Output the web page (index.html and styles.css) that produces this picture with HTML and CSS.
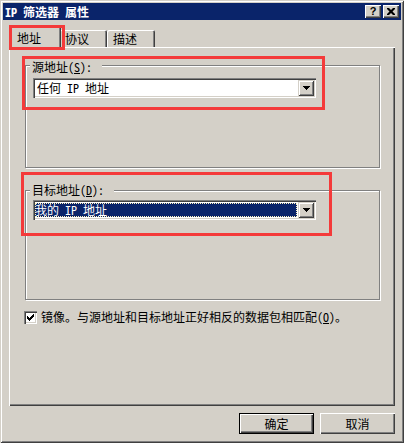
FILE: index.html
```html
<!DOCTYPE html>
<html lang="zh-CN">
<head>
<meta charset="utf-8">
<title>IP 筛选器 属性</title>
<link rel="stylesheet" href="styles.css">
</head>
<body>
<div class="window">
  <div class="titlebar">
    <span class="title">IP 筛选器 属性</span>
    <div class="title-buttons">
      <button class="tbtn help">?</button>
      <button class="tbtn close"><svg width="8" height="7" viewBox="0 0 8 7"><path d="M0 0h2l2 2l2-2h2v1l-2.5 2.5l2.5 2.5v1h-2l-2-2l-2 2h-2v-1l2.5-2.5l-2.5-2.5z" fill="#000"/></svg></button>
    </div>
  </div>

  <div class="tabs">
    <div class="tab selected">地址</div>
    <div class="tab">协议</div>
    <div class="tab">描述</div>
  </div>

  <div class="panel">
    <div class="group group-src">
      <div class="group-label">源地址(<u>S</u>):</div>
      <div class="combo">
        <div class="combo-field"><span class="combo-text">任何 IP 地址</span></div>
        <div class="combo-btn"><svg width="7" height="4" viewBox="0 0 7 4"><path d="M0 0h7v1h-1v1h-1v1h-1v1h-1v-1h-1v-1h-1v-1h-1z" fill="#000"/></svg></div>
      </div>
    </div>

    <div class="group group-dst">
      <div class="group-label">目标地址(<u>D</u>):</div>
      <div class="combo">
        <div class="combo-field"><span class="combo-text focused">我的 IP 地址</span></div>
        <div class="combo-btn"><svg width="7" height="4" viewBox="0 0 7 4"><path d="M0 0h7v1h-1v1h-1v1h-1v1h-1v-1h-1v-1h-1v-1h-1z" fill="#000"/></svg></div>
      </div>
    </div>

    <label class="check-row">
      <span class="checkbox"><svg width="7" height="7" viewBox="0 0 7 7"><path d="M6 0h1v3h-1v1h-1v1h-1v1h-1v1h-1v-1h-1v-1h-1v-1h-1v-3h1v1h1v1h1v1h1v-1h1v-1h1v-1h1z" fill="#000"/></svg></span>
      <span class="check-text">镜像。与源地址和目标地址正好相反的数据包相匹配(<u>O</u>)。</span>
    </label>
  </div>

  <div class="buttons">
    <button class="btn default">确定</button>
    <button class="btn">取消</button>
  </div>

  <div class="mark mark-tab"></div>
  <div class="mark mark-src"></div>
  <div class="mark mark-dst"></div>
</div>
</body>
</html>
```

FILE: styles.css
```css
* { box-sizing: border-box; }
html, body { margin: 0; padding: 0; background: #d4d0c8; }
body {
  font-family: "Noto Sans Mono CJK SC", "Noto Sans CJK SC", "DejaVu Sans", sans-serif;
  font-size: 12px;
  color: #000;
}
.window {
  position: relative;
  width: 404px;
  height: 443px;
  padding: 3px;
  background: #d4d0c8;
  box-shadow: inset 1px 1px #d4d0c8, inset -1px -1px #404040, inset 2px 2px #fff, inset -2px -2px #808080;
}
.titlebar {
  height: 17px;
  background: #0a246a;
  display: flex;
  align-items: center;
  justify-content: space-between;
  padding: 0 2px 0 2px;
}
.title {
  color: #fff;
  font-weight: bold;
  font-size: 12px;
  line-height: 14px;
}
.title-buttons { display: flex; gap: 2px; }
.tbtn {
  width: 16px;
  height: 13px;
  margin: 0;
  padding: 0;
  border: 0;
  background: #d4d0c8;
  box-shadow: inset 1px 1px #fff, inset -1px -1px #404040, inset -2px -2px #808080;
  display: flex;
  align-items: center;
  justify-content: center;
  font-family: "Liberation Sans", sans-serif;
  font-weight: bold;
  font-size: 11px;
  line-height: 11px;
}
.tbtn.help { padding-bottom: 1px; }
.tabs {
  display: flex;
  align-items: flex-end;
  height: 21px;
  margin: 6px 0 0 8px;
}
.tab {
  width: 48px;
  height: 17px;
  padding: 2px 0 0 6px;
  line-height: 14px;
  background: #d4d0c8;
  border-radius: 2px 2px 0 0;
  box-shadow: inset 1px 1px #fff, inset -1px 0 #404040, inset -2px 0 #808080;
  position: relative;
}
.tab.selected {
  width: 52px;
  height: 22px;
  margin: 0 -2px -1px -2px;
  padding: 5px 0 0 8px;
  z-index: 2;
}
.panel {
  position: relative;
  z-index: 1;
  height: 359px;
  margin: 0 6px;
  padding: 18px 0 0 16px;
  background: #d4d0c8;
  box-shadow: inset 1px 1px #fff, inset -1px -1px #404040, inset -2px -2px #808080;
}
.group {
  width: 355px;
  border: 1px solid #808080;
  box-shadow: inset 1px 1px #fff, 1px 1px #fff;
  padding: 0 0 0 7px;
}
.group-src { height: 103px; }
.group-dst { height: 110px; margin-top: 22px; }
.group-label {
  width: fit-content;
  margin: -6px 0 0 -3px;
  padding: 0 10px 0 2px;
  line-height: 14px;
  background: #d4d0c8;
  position: relative;
}
.group-dst .group-label { margin-top: -8px; }
.combo {
  width: 283px;
  height: 20px;
  margin-top: 4px;
  display: flex;
  padding: 2px;
  background: #fff;
  box-shadow: inset 1px 1px #808080, inset 2px 2px #404040, inset -1px -1px #fff, inset -2px -2px #d4d0c8;
}
.group-dst .combo { margin-top: 3px; }
.combo-field {
  flex: 1;
  padding: 1px 1px 1px 0;
  display: flex;
}
.combo-text {
  flex: 1;
  padding-left: 2px;
  line-height: 14px;
}
.combo-text.focused {
  background: #0a246a;
  color: #fff;
  outline: 1px dotted #fff3c0;
  outline-offset: -1px;
  padding-left: 0;
}
.combo-btn {
  width: 16px;
  height: 16px;
  background: #d4d0c8;
  box-shadow: inset 1px 1px #d4d0c8, inset -1px -1px #404040, inset 2px 2px #fff, inset -2px -2px #808080;
  display: flex;
  align-items: center;
  justify-content: center;
}
.combo-btn svg { display: block; }
.check-row {
  display: flex;
  align-items: center;
  margin: 10px 0 0 -1px;
  gap: 4px;
}
.checkbox {
  width: 13px;
  height: 13px;
  background: #fff;
  box-shadow: inset 1px 1px #808080, inset 2px 2px #404040, inset -1px -1px #fff, inset -2px -2px #d4d0c8;
  display: flex;
  align-items: center;
  justify-content: center;
}
.check-text { line-height: 14px; }
.buttons {
  display: flex;
  justify-content: flex-end;
  gap: 6px;
  margin: 7px 6px 0 0;
}
.btn {
  width: 75px;
  height: 21px;
  margin: 0;
  padding: 0;
  border: 0;
  background: #d4d0c8;
  font: inherit;
  line-height: 14px;
  box-shadow: inset 1px 1px #fff, inset -1px -1px #404040, inset -2px -2px #808080;
}
.btn.default {
  box-shadow: inset 0 0 0 1px #000, inset 2px 2px #fff, inset -2px -2px #404040, inset -3px -3px #808080;
}
.mark {
  position: absolute;
  border: 3px solid #f43a3a;
  z-index: 5;
  pointer-events: none;
}
.mark-tab { left: 9px; top: 25px; width: 56px; height: 25px; }
.mark-src { left: 22px; top: 56px; width: 303px; height: 54px; }
.mark-dst { left: 21px; top: 172px; width: 311px; height: 64px; }
```
